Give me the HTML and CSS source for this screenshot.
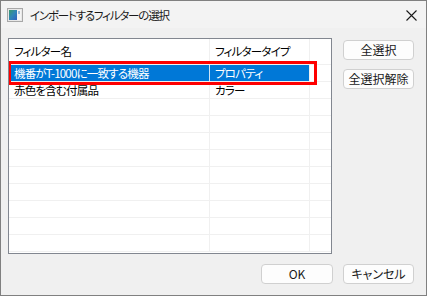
FILE: index.html
```html
<!DOCTYPE html>
<html lang="ja">
<head>
<meta charset="utf-8">
<link rel="stylesheet" href="styles.css">
</head>
<body>
<div class="window">
  <div class="titlebar">
    <svg class="app-icon" width="16" height="14" viewBox="0 0 16 14">
      <defs>
        <linearGradient id="g" x1="0" y1="0" x2="1" y2="1">
          <stop offset="0" stop-color="#3a9a6a"/>
          <stop offset="0.5" stop-color="#2f86b8"/>
          <stop offset="1" stop-color="#3060c0"/>
        </linearGradient>
      </defs>
      <rect x="0.5" y="0.5" width="15" height="13" fill="#e8e8e8" stroke="#a8a8a8"/>
      <rect x="2" y="2" width="8" height="10" fill="url(#g)"/>
      <rect x="10" y="2" width="4" height="10" fill="#f4f4f4"/>
      <rect x="11" y="3" width="2" height="3" fill="#9ab8d8"/>
    </svg>
    <span class="title">インポートするフィルターの選択</span>
    <svg class="close" width="11" height="11" viewBox="0 0 11 11">
      <path d="M0.5 0.5 L10.5 10.5 M10.5 0.5 L0.5 10.5" stroke="#1a1a1a" stroke-width="1.1" fill="none"/>
    </svg>
  </div>
  <div class="content">
    <div class="list">
      <div class="row header">
        <div class="cell c1">フィルター名</div>
        <div class="cell c2">フィルタータイプ</div>
        <div class="cell c3"></div>
      </div>
      <div class="row selected">
        <div class="cell c1">機番がT-1000に一致する機器</div>
        <div class="cell c2">プロパティ</div>
        <div class="cell c3"></div>
      </div>
      <div class="row">
        <div class="cell c1">赤色を含む付属品</div>
        <div class="cell c2">カラー</div>
        <div class="cell c3"></div>
      </div>
      <div class="row"><div class="cell c1"></div><div class="cell c2"></div><div class="cell c3"></div></div>
      <div class="row"><div class="cell c1"></div><div class="cell c2"></div><div class="cell c3"></div></div>
      <div class="row"><div class="cell c1"></div><div class="cell c2"></div><div class="cell c3"></div></div>
      <div class="row"><div class="cell c1"></div><div class="cell c2"></div><div class="cell c3"></div></div>
      <div class="row"><div class="cell c1"></div><div class="cell c2"></div><div class="cell c3"></div></div>
      <div class="row"><div class="cell c1"></div><div class="cell c2"></div><div class="cell c3"></div></div>
      <div class="row"><div class="cell c1"></div><div class="cell c2"></div><div class="cell c3"></div></div>
      <div class="row"><div class="cell c1"></div><div class="cell c2"></div><div class="cell c3"></div></div>
      <div class="row"><div class="cell c1"></div><div class="cell c2"></div><div class="cell c3"></div></div>
      <div class="highlight"></div>
    </div>
    <div class="side">
      <button class="btn">全選択</button>
      <button class="btn">全選択解除</button>
    </div>
    <div class="footer">
      <button class="btn">OK</button>
      <button class="btn">キャンセル</button>
    </div>
  </div>
</div>
</body>
</html>
```
FILE: styles.css
```css
html, body {
  margin: 0;
  padding: 0;
}
body {
  font-family: "Noto Sans CJK JP", "Noto Sans", sans-serif;
  font-feature-settings: "palt";
  font-size: 11px;
  color: #000;
}
.window {
  width: 427px;
  height: 296px;
  box-sizing: border-box;
  border: 1px solid #808080;
  background: #f0f0f0;
  display: flex;
  flex-direction: column;
}
.titlebar {
  height: 27px;
  background: #f3f3f3;
  display: flex;
  align-items: center;
  padding-left: 6px;
}
.app-icon {
  flex: none;
  margin-top: 1px;
}
.title {
  margin-left: 7px;
  font-size: 11.5px;
  letter-spacing: -1.2px;
  color: #1a1a1a;
  flex: 1;
}
.close {
  margin-right: 9px;
  margin-top: 1px;
}
.content {
  flex: 1;
  display: grid;
  grid-template-columns: 324px 71px;
  grid-template-rows: 216px auto;
  column-gap: 11px;
  row-gap: 10px;
  padding: 10px 0 0 7px;
}
.list {
  position: relative;
  background: #fff;
  border: 1px solid #828790;
  overflow: hidden;
}
.row {
  display: flex;
  height: 16px;
  border-bottom: 1px solid #f0f0f0;
}
.row.header {
  height: 25px;
}
.cell {
  box-sizing: border-box;
  padding-left: 5px;
  line-height: 16px;
  font-size: 11.5px;
  letter-spacing: -0.8px;
  white-space: nowrap;
  overflow: hidden;
}
.header .cell {
  line-height: 25px;
}
.c1 {
  width: 201px;
  border-right: 1px solid #f0f0f0;
}
.c2 {
  width: 100px;
  border-right: 1px solid #f0f0f0;
}
.c3 {
  flex: 1;
}
.selected .c1,
.selected .c2 {
  background: #0078d7;
  color: #fff;
}
.selected .c1 {
  border-right-color: #cfe3f5;
}
.highlight {
  position: absolute;
  left: -1px;
  top: 22px;
  width: 309px;
  height: 24px;
  box-sizing: border-box;
  border: 3px solid #ff0000;
}
.side {
  display: flex;
  flex-direction: column;
  gap: 9px;
  padding-top: 2px;
}
.btn {
  width: 71px;
  height: 20px;
  box-sizing: border-box;
  padding: 0;
  background: #fdfdfd;
  border: 1px solid #d0d0d0;
  border-radius: 4px;
  font-family: inherit;
  font-feature-settings: "palt";
  font-size: 12px;
  color: #1a1a1a;
  line-height: 18px;
}
.footer {
  grid-column: 1 / 3;
  display: flex;
  justify-content: flex-end;
  gap: 10px;
}
.footer .btn:first-child {
  width: 72px;
}
```
